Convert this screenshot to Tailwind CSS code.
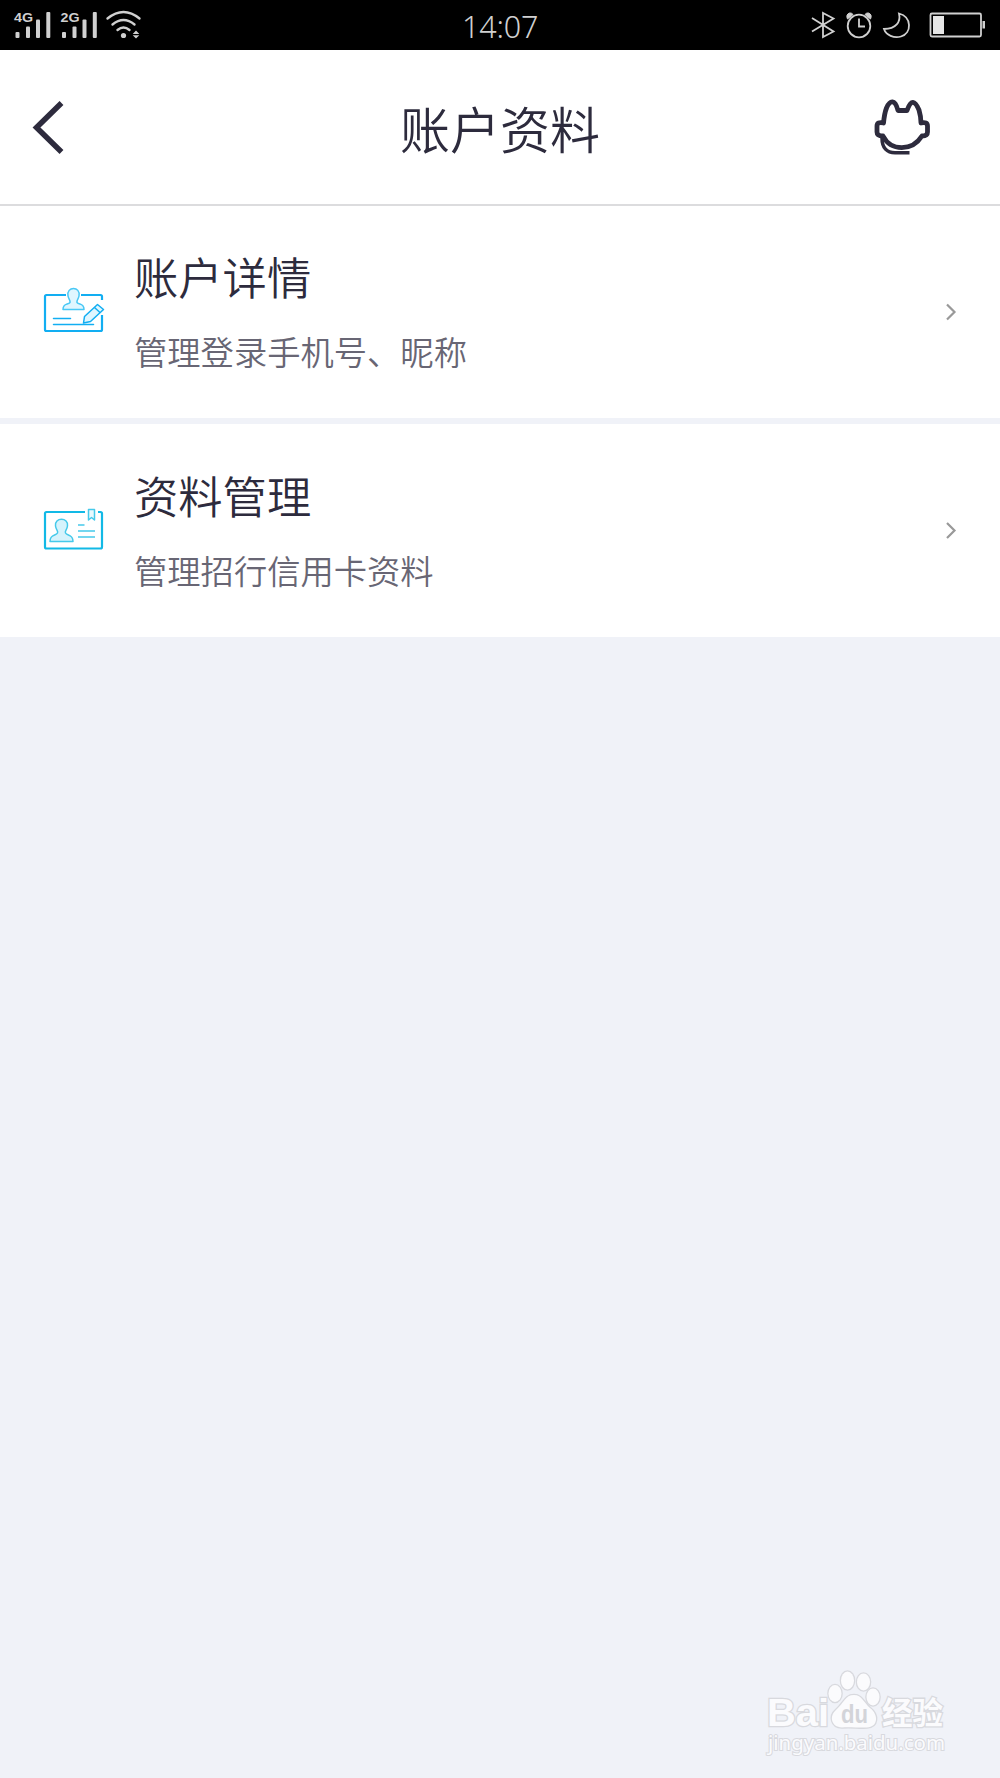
<!DOCTYPE html>
<html lang="zh-CN">
<head>
<meta charset="utf-8">
<title>账户资料</title>
<script src="https://cdn.jsdelivr.net/npm/@tailwindcss/browser@4"></script>
</head>
<body class="min-h-[1778px] w-[1000px] flex flex-col bg-[#f0f2f8] text-[#2d2b3d] font-['Noto_Sans_CJK_SC',sans-serif]">
<div class="h-[50px] shrink-0 bg-black flex items-center justify-between relative">
  <svg class="w-[160px] h-[50px]" viewBox="0 0 160 50" fill="#d0d0d0">
    <g font-family="Liberation Sans" font-weight="700" font-size="13" lengthAdjust="spacingAndGlyphs"><text x="14" y="22" textLength="19" lengthAdjust="spacingAndGlyphs">4G</text><text x="60.500" y="22" textLength="19" lengthAdjust="spacingAndGlyphs">2G</text></g>
    <g id="bars"><rect x="15.500" y="32" width="4" height="6" rx="1"/><rect x="26" y="26.500" width="4" height="11.500" rx="1"/><rect x="36" y="19.500" width="4" height="18.500" rx="1"/><rect x="46.300" y="12" width="4" height="26" rx="1"/></g>
    <use href="#bars" x="46.500"/>
    <g fill="none" stroke="#d0d0d0" stroke-width="2.400" stroke-linecap="round"><path d="M107.500 18.500Q123.500 5.500 139.500 18.500M112.500 24.500Q123.500 15.500 134.500 24.500M117.500 30Q123.500 25 129.500 30"/></g>
    <circle cx="123.500" cy="35.500" r="2.600"/><path d="M136 30.500l3.300 3.500h-6.600zM136 38.500l3.300-3.200h-6.600z"/>
  </svg>
  <div class="absolute left-[462px] top-0 h-[53px] flex items-center text-[30.500px] font-[350] tracking-[-0.200px] text-[#d0d0d0] font-['Noto_Sans',sans-serif]">14:07</div>
  <svg class="w-[200px] h-[50px]" viewBox="0 0 200 50" fill="none" stroke="#d0d0d0" stroke-width="1.800">
    <path d="M12 18L33.500 31.500L23 37V13L33.500 18.500L12 31.500"/>
    <circle cx="59" cy="26" r="11.300"/><path d="M59 18.500V26.500H65"/>
    <path d="M47.500 19Q45.500 14.500 49.500 13Q52 12.500 53 14.500ZM70.500 19Q72.500 14.500 68.500 13Q66 12.500 65 14.500Z" fill="#d0d0d0" stroke-width="1"/>
    <path d="M99 13.500C112 17 112 33 101 36.500C94 38.800 86 35 84 29C96 29 101 22 99 13.500Z"/>
    <rect x="130.500" y="13.500" width="50.500" height="23" rx="1.500"/><rect x="133" y="16" width="11" height="18" fill="#e6e6e6" stroke="none"/><rect x="182.500" y="21" width="2.500" height="7.500" fill="#d0d0d0" stroke="none"/>
  </svg>
</div>
<header class="h-[156px] shrink-0 bg-white border-b-2 border-[#dcdcde] flex items-center justify-between">
  <svg class="w-[130px] h-[154px]" viewBox="0 50 130 154" fill="none" stroke="#2d2b3d" stroke-width="5.500"><path d="M61.500 103L36.500 127.500L61.500 152"/></svg>
  <h1 class="text-[50px] leading-[50px] font-[350]">账户资料</h1>
  <svg class="w-[130px] h-[154px]" viewBox="870 50 130 154" fill="none" stroke="#2d2b3d" stroke-width="4.800" stroke-linejoin="round">
    <path d="M898 110.500H907C911 99 915 100.500 919 110C920.500 115 921 119 921 123Q927.500 121.500 927.500 126V132Q927.500 136 922 136C912 151.500 891 151.500 883 136Q877 136 877 132V126Q877 121.500 883.500 123C884 118 884.500 113 886.500 108C890 100 895 99 898 110.500Z"/>
    <path d="M882 138C882 148 887 152.800 895 152.800H909.500" stroke-width="3.500"/>
  </svg>
</header>
<main class="flex flex-col gap-[6px]">
  <section class="h-[212px] bg-white flex items-center">
    <svg class="w-[134px] h-[212px] shrink-0" viewBox="0 206 134 212" fill="none" stroke="#12aef2" stroke-width="1.500" stroke-linejoin="round">
      <path d="M66 295H46.500Q45 295 45 296.500V329.500Q45 331 46.500 331H100.500Q102 331 102 329.500V315M81 295H100.500Q102 295 102 296.500V300" stroke-width="2.200"/>
      <path d="M68 296C66 286 81 286 79 296C78.500 299 76.500 300 77 302.500C79 305 84 303 84 309.500H63C63 303 68 305 70 302.500C70.500 300 68.500 299 68 296Z" fill="#dff6ff" stroke="#49c8f5"/>
      <path d="M53.500 318.500H70.500M53.500 324.500H93.500" stroke-linecap="round"/>
      <path d="M83.500 323L84.500 316.500L97.500 304.500L103.500 309.500L90.500 321.500ZM94.500 307.500L100 312.500" fill="#dff6ff"/>
    </svg>
    <div class="flex flex-col grow gap-[36px] pb-[2px]"><h2 class="text-[44.300px] leading-[44px] font-[350]">账户详情</h2><p class="text-[33.300px] leading-[34px] font-[350] text-[#686674]">管理登录手机号、昵称</p></div>
    <svg class="w-[100px] h-[212px]" viewBox="900 206 100 212" fill="none" stroke="#999" stroke-width="2.200"><path d="M947 304.500L954.500 312L947 319.500"/></svg>
  </section>
  <section class="h-[213px] bg-white flex items-center">
    <svg class="w-[134px] h-[213px] shrink-0" viewBox="0 424 134 213" fill="none" stroke="#12b9e6" stroke-width="1.500" stroke-linejoin="round">
      <path d="M85 512H46.500Q45 512 45 513.500V547Q45 548.500 46.500 548.500H100.500Q102 548.500 102 547V513.500Q102 512 100.500 512H98" stroke-width="2.200"/>
      <path d="M55.500 526C54 517 69 517 67.500 526C67 530 64.500 531 65.500 533C67 536 73 534 73 541.500H50C50 534 56 536 57.500 533C58.500 531 56 530 55.500 526Z" fill="#d6f3fc" stroke="#45c9ea"/>
      <path d="M78 525H84.500M78 531H95M78 537H95" stroke="#45c9ea"/>
      <path d="M88.500 509.500H94.500V520L91.500 517.500L88.500 520Z" fill="#e8f9fe" stroke="#45c9ea"/>
    </svg>
    <div class="flex flex-col grow gap-[36px] pb-[2px]"><h2 class="text-[44.300px] leading-[44px] font-[350]">资料管理</h2><p class="text-[33.300px] leading-[34px] font-[350] text-[#686674]">管理招行信用卡资料</p></div>
    <svg class="w-[100px] h-[213px]" viewBox="900 424 100 213" fill="none" stroke="#999" stroke-width="2.200"><path d="M947 523L954.500 530.500L947 538"/></svg>
  </section>
</main>
<svg class="mt-auto ml-auto mr-[30px] w-[220px] h-[128px]" viewBox="0 0 220 128" fill="#fbfbfd" stroke="#d8d9de" stroke-width="2.600" paint-order="stroke">
  <g font-family="Liberation Sans" font-weight="700"><text x="17" y="76" font-size="39" textLength="62" lengthAdjust="spacingAndGlyphs">Bai</text></g>
  <ellipse cx="85" cy="43.500" rx="6.500" ry="8.500"/><ellipse cx="97.500" cy="30.500" rx="6.500" ry="9"/><ellipse cx="113.500" cy="32" rx="6.500" ry="8.500"/><ellipse cx="123" cy="47" rx="6.500" ry="8.500"/>
  <path d="M104 45C112 45 114 53 120 58C129 65 128 77 117 77.500C109 78 99 76.500 92 77.500C81 77 79 66 86 60C94 53 95 45 104 45Z"/>
  <text x="91" y="72.500" font-family="Liberation Sans" font-weight="700" font-size="25" textLength="27" lengthAdjust="spacingAndGlyphs" fill="#d3d4d9" stroke="none">du</text>
  <text x="132" y="74" font-family="Noto Sans CJK SC" font-weight="700" font-size="30.500">经验</text>
  <text x="18" y="100" font-family="Noto Sans" font-size="19" textLength="177" lengthAdjust="spacingAndGlyphs" stroke-width="2">jingyan.baidu.com</text>
</svg>
</body>
</html>
